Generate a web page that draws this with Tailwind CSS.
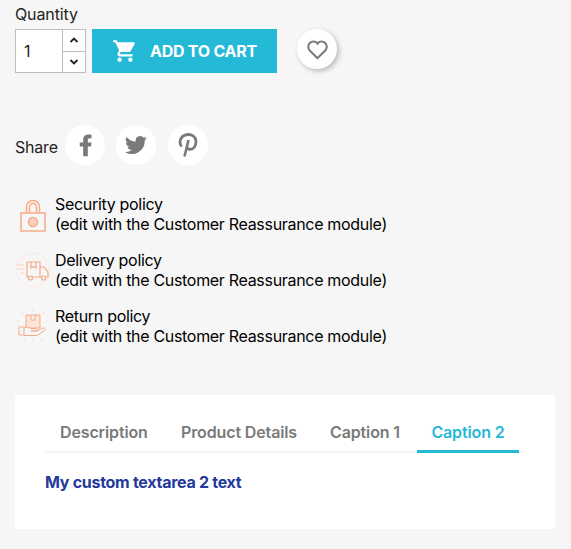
<!DOCTYPE html>
<html><head><meta charset="utf-8"><script src="https://cdn.jsdelivr.net/npm/@tailwindcss/browser@4"></script></head>
<body class="bg-[#f6f6f6] font-['Inter','Liberation_Sans',sans-serif] text-[#232323] overflow-hidden">
<div class="h-[549px] w-[571px] px-[15px] pt-[3px] flex flex-col">
  <div class="text-[16px] leading-[22px] h-[26px] tracking-[-0.12px]">Quantity</div>
  <div class="flex items-center h-[44px]">
    <div class="flex w-[71px] h-[44px] border border-[#bdbdbd] bg-white">
      <div class="w-[46px] pl-[8px] text-[16px] leading-[42px]">1</div>
      <div class="flex-1 flex flex-col border-l border-[#bdbdbd]">
        <div class="flex-1 flex items-center justify-center border-b border-[#bdbdbd]"><svg width="10" height="6" viewBox="0 0 10 6" fill="none" stroke="#232323" stroke-width="1.8"><path d="M1.500 5 5 1.500 8.500 5"/></svg></div>
        <div class="flex-1 flex items-center justify-center"><svg width="10" height="6" viewBox="0 0 10 6" fill="none" stroke="#232323" stroke-width="1.8"><path d="M1.500 1 5 4.500 8.500 1"/></svg></div>
      </div>
    </div>
    <div class="ml-[6px] w-[185px] h-[44px] bg-[#24b9d7] flex items-center text-white font-bold text-[16px] tracking-[-0.25px] pl-[20px]">
      <svg width="26" height="26" viewBox="0 0 24 24" fill="#fff"><path d="M7 18c-1.100 0-2 .9-2 2s.9 2 2 2 2-.9 2-2-.9-2-2-2zM1 2v2h2l3.600 7.590-1.350 2.450c-.16.28-.25.61-.25.96 0 1.100.9 2 2 2h12v-2H7.420c-.14 0-.25-.11-.25-.25l.03-.12.9-1.630h7.450c.75 0 1.410-.41 1.750-1.030l3.580-6.490A1 1 0 0 0 20 4H5.210l-.94-2H1zm16 16c-1.100 0-2 .9-2 2s.9 2 2 2 2-.9 2-2-.9-2-2-2z"/></svg>
      <span class="ml-[12px]">ADD TO CART</span>
    </div>
    <div class="ml-[20px] -mt-[4px] w-[40px] h-[40px] rounded-full bg-white shadow-[2px_2px_5px_rgba(0,0,0,0.25)] flex items-center justify-center">
      <svg width="25" height="25" viewBox="0 0 24 24" fill="none" stroke="#7a7a7a" stroke-width="2"><path d="M12 20.300 4.600 13a5.100 5.100 0 0 1 0-7.200 5 5 0 0 1 7.100 0l.3.4.3-.4a5 5 0 0 1 7.100 0 5.100 5.100 0 0 1 0 7.200z"/></svg>
    </div>
  </div>
  <div class="mt-[52px] flex items-center h-[40px] text-[16px] tracking-[-0.2px]">
    <span class="w-[50px] pt-[3px]">Share</span>
    <div class="w-[40px] h-[40px] rounded-full bg-white flex items-center justify-center">
      <svg width="13" height="24" viewBox="0 0 14 24" fill="#7a7a7a"><path d="M9.500 24V13.500h3.400l.6-4.200h-4V6.700c0-1.200.4-2 2.100-2h1.900V1c-.4 0-1.700-.2-3.200-.2C7 .8 4.500 2.700 4.500 6.200v3.100H.8v4.200h3.700V24z"/></svg>
    </div>
    <div class="ml-[11px] w-[40px] h-[40px] rounded-full bg-white flex items-center justify-center">
      <svg width="24" height="24" viewBox="0 0 24 24" fill="#7a7a7a"><path d="M23 5.200c-.8.400-1.700.6-2.600.7.900-.6 1.600-1.400 2-2.500-.9.500-1.800.9-2.900 1.100a4.500 4.500 0 0 0-7.700 4.100C8 8.400 4.700 6.600 2.500 3.900a4.500 4.500 0 0 0 1.400 6c-.7 0-1.400-.2-2-.6 0 2.200 1.500 4.100 3.600 4.500-.7.200-1.400.2-2 .1.600 1.800 2.200 3.100 4.200 3.100A9 9 0 0 1 1 18.900 12.800 12.800 0 0 0 20.700 7.500c.9-.6 1.700-1.400 2.300-2.300z"/></svg>
    </div>
    <div class="ml-[12px] w-[40px] h-[40px] rounded-full bg-white flex items-center justify-center">
      <svg width="20" height="26" viewBox="0 0 20 26" fill="none" stroke="#7a7a7a" stroke-width="2.800"><path d="M3.800 14.500C2.500 13.500 2 12 2 10.200 2 5.600 5.500 2.500 10 2.500s8 2.700 8 7c0 4.500-2.500 7.800-6 7.800-1.600 0-3-1-3.200-2.300"/><path d="M10.500 8 6.500 24.500" stroke-width="2.600"/></svg>
    </div>
  </div>
  <div class="mt-[29px] flex flex-col gap-[16px] text-[16px] leading-[20px] tracking-[-0.31px] text-black">
    <div class="flex h-[40px]">
      <div class="w-[40px] flex items-start pt-[5px] pl-[5px]">
        <svg width="26" height="33" viewBox="0 0 26 33" fill="none" stroke="#f7ab8a" stroke-width="1.500"><path d="M6.500 14V8a6.500 6.500 0 0 1 13 0v6M9.500 14V8a3.500 3.500 0 0 1 7 0v6"/><rect x="1" y="14" width="24" height="18"/><circle cx="13" cy="23" r="4.500" fill="#fbd1bd"/></svg>
      </div>
      <div><span>Security policy</span><br><span>(edit with the Customer Reassurance module)</span></div>
    </div>
    <div class="flex h-[40px]">
      <div class="w-[40px] pt-[2px]">
        <svg width="36" height="36" viewBox="0 0 36 36" fill="none" stroke="#f7ab8a" stroke-width="1.200" class="-ml-[1px]"><circle cx="19" cy="18" r="16.500" stroke="#fbe3d8" stroke-dasharray="2 2"/><path d="M13 10h13v15H13zM17 10v6l2.500-1.500L22 16v-6M26 15h4l4 5v5h-8"/><circle cx="16.500" cy="26" r="2" fill="#f6f6f6"/><circle cx="29.500" cy="26" r="2" fill="#f6f6f6"/><path d="M2 13h8M4 17h6M6 21h4" stroke="#fbd1bd"/></svg>
      </div>
      <div><span>Delivery policy</span><br><span>(edit with the Customer Reassurance module)</span></div>
    </div>
    <div class="flex h-[40px]">
      <div class="w-[40px] pt-[1px]">
        <svg width="36" height="38" viewBox="0 0 36 38" fill="none" stroke="#f7ab8a" stroke-width="1"><path d="M11 8h14v13H11zM16 8v5h4V8" fill="#fde5d9"/><path d="M4 20h5v8H4zM9 21c3-1.500 5-1 7 .5h5c1.500 0 1.500 2.500 0 2.500h-5 6l6-3c2-.5 3 1.200 1.500 2.500L22 28.500H9" fill="#f6f6f6"/><path d="M18 2v2M7 5l1 2M29 5l-1 2M2 14h2M32 14h2M10 32l-1 2M26 32l1 2M18 33v2" stroke="#fbdccd" stroke-linecap="round"/></svg>
      </div>
      <div><span>Return policy</span><br><span>(edit with the Customer Reassurance module)</span></div>
    </div>
  </div>
  <div class="mt-[49px] w-[540px] h-[134px] bg-white px-[30px] pt-[23px]">
    <div class="flex h-[35px] border-b-2 border-[#f6f6f6] font-semibold text-[16px] tracking-[-0.13px] text-[#7a7a7a] pl-[15px]">
      <div class="h-[35px] w-[121px] leading-[29px]">Description</div>
      <div class="h-[35px] w-[149px] leading-[29px]">Product Details</div>
      <div class="h-[35px] w-[87px] leading-[29px]">Caption 1</div>
      <div class="h-[35px] w-[102px] -mb-[2px] border-b-[3px] border-[#24b9d7] text-[#24b9d7] leading-[29px] text-center">Caption 2</div>
    </div>
    <div class="mt-[18px] text-[16px] leading-[22px] font-bold tracking-[-0.28px] text-[#24399c]">My custom textarea 2 text</div>
  </div>
</div>
</body></html>
